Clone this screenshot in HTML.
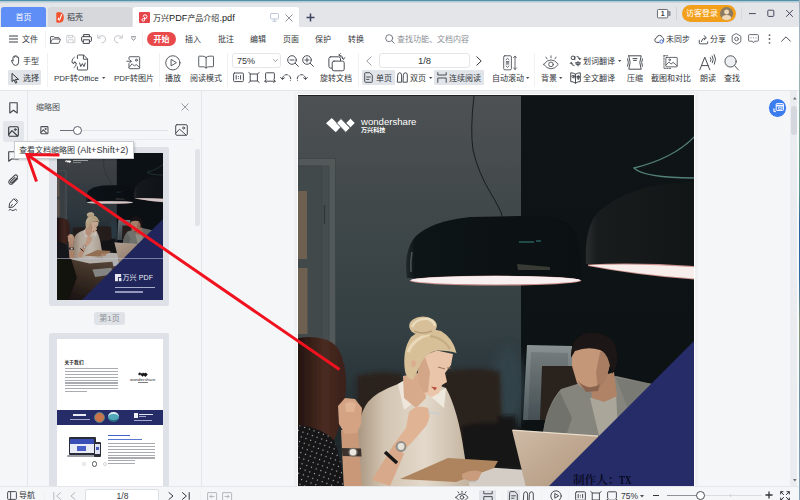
<!DOCTYPE html>
<html lang="zh-CN">
<head>
<meta charset="utf-8">
<title>万兴PDF产品介绍.pdf</title>
<style>
*{box-sizing:border-box;margin:0;padding:0}
html,body{width:800px;height:500px;overflow:hidden;background:#f5f6f8}
body{position:relative;font-family:"Liberation Sans","Noto Sans CJK SC",sans-serif;font-size:8px;color:#3a3d42;line-height:1}
.a{position:absolute}
.t{position:absolute;white-space:nowrap;line-height:12px;height:12px;font-size:8px;color:#33363b}
.c{text-align:center}
.vd{position:absolute;width:1px;background:#eff1f3}
svg{position:absolute;overflow:visible}
.ic{fill:none;stroke:#4a4e55;stroke-width:1;stroke-linecap:round;stroke-linejoin:round}
.hl{position:absolute;background:#e1e5ea;border-radius:1px}
</style>
</head>
<body>
<svg style="left:0;top:0" width="0" height="0"><defs>
<filter id="b1" x="-20%" y="-20%" width="140%" height="140%"><feGaussianBlur stdDeviation="0.7"/></filter>
<filter id="b2" x="-20%" y="-20%" width="140%" height="140%"><feGaussianBlur stdDeviation="2"/></filter>
<filter id="b4" x="-30%" y="-30%" width="160%" height="160%"><feGaussianBlur stdDeviation="5"/></filter>
<filter id="b8" x="-50%" y="-50%" width="200%" height="200%"><feGaussianBlur stdDeviation="14"/></filter>
<linearGradient id="wallL" x1="0" y1="0" x2="0" y2="1"><stop offset="0" stop-color="#4d5153"/><stop offset="0.12" stop-color="#474c4e"/><stop offset="0.26" stop-color="#3d4648"/><stop offset="0.44" stop-color="#333f42"/><stop offset="0.52" stop-color="#2b363a"/><stop offset="0.62" stop-color="#20292c"/><stop offset="1" stop-color="#181f22"/></linearGradient>
<linearGradient id="wallR" x1="0" y1="0" x2="0" y2="1"><stop offset="0" stop-color="#0f1517"/><stop offset="1" stop-color="#0b0f11"/></linearGradient>
<linearGradient id="lampG" x1="0" y1="0" x2="1" y2="0"><stop offset="0" stop-color="#232a2c"/><stop offset="0.05" stop-color="#0e1517"/><stop offset="1" stop-color="#0b1012"/></linearGradient>
<linearGradient id="lamp2G" x1="0" y1="0" x2="1" y2="0"><stop offset="0" stop-color="#2c2e2e"/><stop offset="0.1" stop-color="#181c1d"/><stop offset="1" stop-color="#111516"/></linearGradient>
<linearGradient id="shirtG" x1="0" y1="0" x2="1" y2="0"><stop offset="0" stop-color="#a8957f"/><stop offset="0.25" stop-color="#d3c5b2"/><stop offset="0.6" stop-color="#e3d9cb"/><stop offset="1" stop-color="#c3b39e"/></linearGradient>
<linearGradient id="lapG" x1="0" y1="0" x2="1" y2="1"><stop offset="0" stop-color="#cfbba6"/><stop offset="0.5" stop-color="#bba38c"/><stop offset="1" stop-color="#9a846e"/></linearGradient>
<linearGradient id="hairG" x1="0" y1="0" x2="1" y2="0"><stop offset="0" stop-color="#24140f"/><stop offset="0.55" stop-color="#4a2b21"/><stop offset="1" stop-color="#3a2019"/></linearGradient>
<pattern id="dots" width="5" height="5" patternUnits="userSpaceOnUse" patternTransform="rotate(20)"><rect width="5" height="5" fill="#121217"/><circle cx="2.5" cy="2.5" r="0.7" fill="#b9b6b0"/></pattern>
<symbol id="photo" viewBox="298 96 397 550" preserveAspectRatio="xMidYMin slice">
<rect x="298" y="96" width="226" height="540" fill="url(#wallL)"/>
<rect x="521" y="96" width="180" height="540" fill="url(#wallR)"/>
<!-- door -->
<g filter="url(#b1)">
<path d="M298 158.5H335.5V345H298Z" fill="#525959" stroke="#3b4244" stroke-width="0.8"/>
<path d="M298 166H329V345H298Z" fill="#474e50" stroke="#3d4446" stroke-width="0.7"/>
<path d="M298 166H322V345H298Z" fill="#434a4c" stroke="#3a4143" stroke-width="0.6"/>
<path d="M298 191H307V259H298ZM298 268H307.5V334H298Z" fill="#6d6051"/>
<path d="M324.5 205V224" stroke="#2f3537" stroke-width="1.4" fill="none"/>
</g>
<ellipse cx="508" cy="388" rx="16" ry="42" fill="#33434a" filter="url(#b4)"/>
<!-- frames behind man -->
<g filter="url(#b1)">
<linearGradient id="frmG" x1="0" y1="0" x2="0" y2="1"><stop offset="0" stop-color="#899191"/><stop offset="1" stop-color="#4f5b60"/></linearGradient><path d="M527 345L572 346L573 420H523Z" fill="url(#frmG)"/>
<path d="M531 352L568 353L569 420H528Z" fill="#000" opacity="0.12"/>
<path d="M542 366H578V420H540Z" fill="#2c221d"/>
</g>
<!-- chairs -->
<g filter="url(#b2)">
<path d="M357 376Q380 370 402 374V425H357Z" fill="#2b221d"/>
<path d="M443 372Q480 366 500 372L503 448H443Z" fill="#2b201b"/>
<path d="M462 426Q495 418 524 428V470H462Z" fill="#141618"/>
<path d="M498 416H516V470H498Z" fill="#121517"/>
</g>
<!-- cords -->
<path d="M474 96Q470 130 473 150Q478 172 490 192T502 216" stroke="#121719" stroke-width="0.9" fill="none"/>
<path d="M696 135Q675 158 634 168Q644 178 696 178" stroke="#527f78" stroke-width="1.3" fill="none"/>
<!-- lamp 1 -->
<path d="M407 278Q403 250 416 236Q432 221 470 217L540 215.5Q566 217 576 232Q582 250 581 280Z" fill="url(#lampG)"/>
<path d="M412 252Q410 262 411 272" stroke="#4a5052" stroke-width="1.6" fill="none" filter="url(#b1)"/>
<ellipse cx="495.5" cy="280.6" rx="86" ry="5" fill="#c98f8a"/>
<ellipse cx="495.5" cy="280.2" rx="84.5" ry="4.2" fill="#f8f0f0" filter="url(#b1)"/>
<path d="M519 242H534M536 241H541" stroke="#3f9f96" stroke-width="1.2" fill="none" opacity="0.8"/>
<path d="M517 264L550 267V270H518Z" fill="#3d4038" opacity="0.9"/>
<!-- lamp 2 -->
<path d="M586 264Q584 228 598 212Q624 190 660 185L700 181.5V266Z" fill="url(#lamp2G)"/>
<path d="M588 264.5Q640 262 700 266.5V280Q640 276 588 266Z" fill="#c98f8a"/>
<path d="M590 265Q640 263 700 267.5V279Q640 275 590 265.5Z" fill="#f7eeec" filter="url(#b1)"/>
<!-- man -->
<g filter="url(#b1)">
<path d="M543 434Q546 406 561 389L590 380L616 376L652 384Q661 398 664 440Z" fill="#85857e"/>
<path d="M543 434Q546 408 560 392L572 418L566 436Z" fill="#72726c"/>
<path d="M616 378L652 384Q660 398 664 440H640Z" fill="#7a7a74"/>
<path d="M590 398L616 392L618 432L600 440Z" fill="#aaa699"/>
<path d="M590 380L614 372L617 396L604 402L592 398Z" fill="#b08266"/>
<path d="M572 350L590 345L606 350L610 364L606 380L598 390L586 391L577 383L572 366Z" fill="#c59779"/>
<path d="M600 352L606 350L610 364L606 380L598 390L596 372Z" fill="#a87d62"/>
<path d="M577 380Q588 392 600 384L598 391L586 392Z" fill="#8a6450"/>
<path d="M571 358Q570 340 584 334Q600 330 612 340Q619 350 617 364L612 374L609 362Q606 352 600 350Q588 346 575 351Z" fill="#1e1613"/>
</g>
<!-- table -->
<linearGradient id="tblG" x1="0.8" y1="0" x2="0.1" y2="1"><stop offset="0" stop-color="#7a6650"/><stop offset="0.45" stop-color="#4e3c2c"/><stop offset="1" stop-color="#1b1410"/></linearGradient>
<path d="M298 482H700V650H298Z" fill="url(#tblG)" filter="url(#b2)"/>
<path d="M345 482L520 478L528 500L420 508L350 492Z" fill="#d6d0c8" filter="url(#b2)"/>
<path d="M430 530L500 524L512 548L440 558Z" fill="#9c9c98" filter="url(#b1)"/>
<path d="M482 467L527 470L531 492H472Z" fill="#d3cdc5" filter="url(#b1)"/>
<path d="M504 498L528 496L530 516L508 518Z" fill="#cdcfce" filter="url(#b1)"/>
<path d="M298 488H350L372 560L340 650H298Z" fill="#17120f" filter="url(#b2)"/>
<!-- laptop -->
<path d="M512 430L598 436L612 500L530 504Z" fill="url(#lapG)" filter="url(#b1)"/>
<path d="M512.5 430.2L598 436.2" stroke="#e9dccb" stroke-width="1.2" fill="none"/>
<!-- blonde woman -->
<g filter="url(#b1)">
<path d="M357 470Q354 420 368 402Q376 392 398 384L412 376L446 388Q458 410 464 452L470 490H357Z" fill="url(#shirtG)"/>
<path d="M398 384L412 376L420 398L404 410Z" fill="#eee6da"/>
<path d="M430 396L446 388L444 408Z" fill="#efe8dc"/>
<path d="M403 376L423 372L426 398L416 408L404 398Z" fill="#d7aa8c"/>
<path d="M419 365L425 355L437 350.6L453 354L451 365L445 373L447 382L442 385L439 393L432 397L423 393L417 381Z" fill="#eac5a9"/>
<path d="M419 365L425 357L430 372L428 392L423 393L417 381Z" fill="#d3a688"/>
<path d="M431 386.5L437 387.5L435 390.5Z" fill="#b9503f"/>
<path d="M438 367L445 369M447 368L451 368" stroke="#8a6a55" stroke-width="0.9" fill="none"/>
<path d="M405 371Q402 350 411 337Q424 327 441 331Q453 338 456.5 353Q450 351 437 350.6Q427 353 422 361L417 372L413 380Q406 378 405 371Z" fill="#d7bf98"/>
<path d="M408 352Q414 338 430 334" stroke="#ead9b8" stroke-width="3.2" fill="none"/>
<path d="M430 336Q444 338 450 349" stroke="#c4ab82" stroke-width="2" fill="none"/>
<ellipse cx="413.5" cy="363.5" rx="2.4" ry="3.6" fill="#dcae90"/>
<ellipse cx="423" cy="326" rx="13.8" ry="9.4" fill="#d6bf99"/>
<path d="M412 327Q416 318 428 319Q434 321 435 326" stroke="#eadbbd" stroke-width="2.4" fill="none"/>
<path d="M414 331Q422 335 432 331" stroke="#b89f78" stroke-width="1.4" fill="none"/>
<path d="M409 412Q416 404 428 408Q432 416 426 426L414 440L402 452L394 444L406 428Z" fill="#e0b394"/>
<path d="M372 480L394 444L404 454L390 486Z" fill="#d8aa8b"/>
<circle cx="401" cy="446.5" r="5.4" fill="#8f8d88"/><circle cx="401" cy="446.5" r="3.4" fill="#e6e2da"/>
<path d="M385 452L397 463" stroke="#141414" stroke-width="3.4" fill="none"/>
<path d="M428 412L440 414" stroke="#c9ccd0" stroke-width="1.4" fill="none"/>
</g>
<!-- clipboard -->
<path d="M400 479L448 458L498 461L494 468L456 482Z" fill="#ad845d" filter="url(#b1)"/>
<path d="M462 474Q472 468 482 472L478 480Q468 482 462 478Z" fill="#c99c7e" filter="url(#b1)"/>
<!-- dark haired woman -->
<g filter="url(#b1)">
<path d="M298 338Q326 334 338 348Q347 364 346 390Q344 420 334 440L298 440Z" fill="url(#hairG)"/>
<path d="M341 430L358 430L362 490H344Z" fill="#c99878"/>
<path d="M338 406L345 398L355 399L362 408L361 424L357 433L345 434L339 424Z" fill="#d3a383"/>
<path d="M345 404Q350 400 356 404L354 412L346 412Z" fill="#e0b394"/>
<path d="M341.5 448L361 448.5L361.5 456.5L342.5 456Z" fill="#3a332e"/>
<circle cx="353" cy="452.3" r="4.6" fill="#7a746c"/><circle cx="353" cy="452.3" r="3.3" fill="#ebe7df"/>
<path d="M298 425Q322 428 334 440Q342 460 344 490H298Z" fill="url(#dots)"/>
</g>
<!-- navy triangle + bottom band -->
<path d="M695 340V650H385Z" fill="#262c68"/>
</symbol>
</defs></svg>

<!-- ===== title / tab bar ===== -->
<div class="a" id="titlebar" style="left:0;top:0;width:800px;height:27px;background:#e3e5e9"></div>
<div class="a" style="left:0;top:0;width:800px;height:1px;background:#4f92aa"></div><div class="a" style="left:0;top:1px;width:800px;height:1px;background:#b4cbd5"></div>
<div class="a" style="left:0;top:2px;width:800px;height:1px;background:#c9d6dd"></div>
<div class="a" id="tab-home" style="left:1px;top:7px;width:45px;height:20px;background:#5f8ef7;border-radius:3px 3px 0 0"></div>
<div class="t c" style="left:1px;top:12px;width:45px;color:#fff">首页</div>
<div class="a" id="tab-dk" style="left:48px;top:7px;width:84px;height:20px;background:#d6d8dc;border-radius:3px 3px 0 0"></div>
<div class="t" style="left:67px;top:12px">稻壳</div>
<div class="a" id="tab-act" style="left:133px;top:7px;width:166px;height:20px;background:#fff;border-radius:3px 3px 0 0"></div>
<div class="t" style="left:153px;top:11.7px;color:#222">万兴<span style="font-size:9.2px">PDF</span>产品介绍<span style="font-size:9.2px">.pdf</span></div>

<!-- ===== menu bar ===== -->
<div class="a" id="menubar" style="left:0;top:27px;width:800px;height:23px;background:#fff"></div>

<!-- tab icons -->
<svg style="left:56px;top:12px" width="8" height="11" viewBox="0 0 8 11"><path d="M0.3 1.5Q0.3 0.3 1.5 0.3H4.2Q7.8 1 7.8 5.5Q7.8 10.7 3 10.7H1.5Q0.3 10.7 0.3 9.5Z" fill="#f4502c"/><path d="M5.6 2.6L3.9 7.2Q3.4 8.3 2.5 7.6Q1.9 7 2.6 6.2" fill="none" stroke="#fff" stroke-width="1.1" stroke-linecap="round"/></svg>
<svg style="left:139px;top:12px" width="11" height="11" viewBox="0 0 11 11"><rect width="11" height="11" rx="1" fill="#e5454a"/><path d="M4.2 4.8A1.9 1.9 0 1 1 6.1 6.6H4.4A1.3 1.3 0 1 0 5.6 7.9V5" fill="none" stroke="#fff" stroke-width="1"/></svg>
<svg style="left:270px;top:13px" width="9" height="9" viewBox="0 0 9 9" class="ic" stroke="#b4bfd0"><rect x="0.5" y="0.5" width="8" height="5.5" rx="0.8" style="stroke:#bcc7d9"/><path d="M4.5 6V8M2.8 8.3H6.2" style="stroke:#bcc7d9"/></svg>
<svg style="left:285px;top:14px" width="8" height="8" viewBox="0 0 8 8"><path d="M0.5 0.5L7.5 7.5M7.5 0.5L0.5 7.5" stroke="#8d9097" stroke-width="1" fill="none"/></svg>
<svg style="left:306px;top:13px" width="9" height="9" viewBox="0 0 9 9"><path d="M4.5 0.5V8.5M0.5 4.5H8.5" stroke="#3d4560" stroke-width="1.5" fill="none"/></svg>
<!-- window controls -->
<svg style="left:657.4px;top:8.8px" width="14" height="9.4" viewBox="0 0 15 10"><rect x="0.5" y="0.5" width="11" height="9" rx="1" fill="#fff" stroke="#5d6168"/><path d="M12 2H14L14.5 3.5V7.5H12Z" fill="#8a8e95"/><text x="6" y="8" font-size="7.5" text-anchor="middle" fill="#3a3d42" font-family="Liberation Sans,sans-serif" font-weight="bold">1</text></svg>
<div class="vd" style="left:676px;top:7px;height:13px;background:#cfd2d7"></div>
<div class="a" style="left:682px;top:5px;width:53.5px;height:17px;border-radius:9px;background:#f2a01c;box-shadow:0 0 0 1px #dfe4f2"></div>
<div class="t" style="left:686px;top:8.3px;color:#fff">访客登录</div>
<svg style="left:720.4px;top:7.4px" width="13.2" height="13.2" viewBox="0 0 14 14"><circle cx="7" cy="7" r="7" fill="#8d7a62"/><circle cx="7" cy="5.3" r="2.6" fill="#f0d9b8"/><path d="M2 12Q2.5 8.6 7 8.6T12 12A7 7 0 0 1 2 12Z" fill="#f0d9b8"/></svg>
<div class="vd" style="left:741px;top:7px;height:13px;background:#d5d8dc"></div>
<svg style="left:749px;top:8px" width="45" height="10" viewBox="0 0 45 10" fill="none" stroke="#454a5e" stroke-width="1"><path d="M0 5.6H6.8"/><rect x="18.8" y="2.2" width="6" height="6.2" rx="0.8"/><path d="M37.2 2L43.8 8.8M43.8 2L37.2 8.8"/></svg>

<!-- menu row -->
<svg style="left:9px;top:35px" width="9" height="8" viewBox="0 0 9 8"><path d="M0 1H9M0 4H9M0 7H9" stroke="#3c3f45" stroke-width="1" fill="none"/></svg>
<div class="t" style="left:22px;top:34.3px">文件</div>
<div class="vd" style="left:45px;top:31px;height:16px"></div>
<svg style="left:50px;top:35.6px" width="11" height="8" viewBox="0 0 11 10" preserveAspectRatio="none" class="ic"><path d="M0.5 8.5V1.3Q0.5 0.7 1.1 0.7H3.6L4.8 2H8.6Q9.2 2 9.2 2.6V3.8M0.5 8.9L2.2 4.2Q2.4 3.8 2.9 3.8H10Q10.7 3.8 10.4 4.5L9 8.6Q8.8 9.2 8.2 9.2H1Q0.5 9.2 0.5 8.7"/></svg>
<svg style="left:66px;top:35.4px" width="9.5" height="8.2" viewBox="0 0 10 10" preserveAspectRatio="none" class="ic"><path d="M0.6 1.2Q0.6 0.6 1.2 0.6H7.3L9.4 2.7V8.8Q9.4 9.4 8.8 9.4H1.2Q0.6 9.4 0.6 8.8ZM2.6 0.8V3.3H6.8V0.8M2.4 9.2V5.8H7.6V9.2" stroke="#c9ccd1"/></svg>
<svg style="left:81px;top:34px" width="11" height="10" viewBox="0 0 11 10" class="ic"><path d="M2.6 2.6V0.6H8.4V2.6M2.4 7.4H1.3Q0.6 7.4 0.6 6.7V3.4Q0.6 2.7 1.3 2.7H9.7Q10.4 2.7 10.4 3.4V6.7Q10.4 7.4 9.7 7.4H8.6M2.6 5.8H8.4V9.4H2.6Z" stroke="#3f4349"/></svg>
<svg style="left:97px;top:34px" width="10" height="10" viewBox="0 0 10 10" class="ic"><path d="M0.8 1V4H3.8M1 4Q3 1 5.8 1.6Q9.2 2.8 8.6 6Q8 8.6 5 9" stroke="#c3c6cb"/></svg>
<svg style="left:113px;top:34px" width="10" height="10" viewBox="0 0 10 10" class="ic"><path d="M9.2 1V4H6.2M9 4Q7 1 4.2 1.6Q0.8 2.8 1.4 6Q2 8.6 5 9" stroke="#c3c6cb"/></svg>
<svg style="left:131px;top:36.2px" width="5" height="5.4" viewBox="0 0 7 7" class="ic"><path d="M0.6 0.8H6.4M0.8 3L3.5 5.6L6.2 3" stroke="#4a4e55"/></svg>
<div class="vd" style="left:142px;top:31px;height:16px"></div>
<div class="a" style="left:147px;top:32px;width:29px;height:14px;border-radius:7px;background:#e8494a"></div>
<div class="t c" style="left:147px;top:34.3px;width:29px;color:#fff;font-weight:bold">开始</div>
<div class="t" style="left:185px;top:34.3px">插入</div>
<div class="t" style="left:218px;top:34.3px">批注</div>
<div class="t" style="left:250px;top:34.3px">编辑</div>
<div class="t" style="left:283px;top:34.3px">页面</div>
<div class="t" style="left:315px;top:34.3px">保护</div>
<div class="t" style="left:348px;top:34.3px">转换</div>
<svg style="left:385px;top:34px" width="10" height="10" viewBox="0 0 10 10" class="ic"><circle cx="4.2" cy="4.2" r="3.5" stroke="#777b82"/><path d="M6.8 6.8L9.3 9.3" stroke="#777b82"/></svg>
<div class="t" style="left:397px;top:34.3px;color:#8b8f96">查找功能、文档内容</div>
<!-- menu right -->
<svg style="left:654px;top:34px" width="11" height="10" viewBox="0 0 11 10" class="ic"><path d="M5 8.4H2.8A2.3 2.3 0 0 1 2.5 3.9A3.1 3.1 0 0 1 8.5 3.6A2.4 2.4 0 0 1 9.8 6.5" stroke="#4a4e55"/><circle cx="7.6" cy="7.6" r="1.7" stroke="#4a74d8"/></svg>
<div class="t" style="left:666px;top:34.3px">未同步</div>
<svg style="left:698px;top:35px" width="11" height="9.4" viewBox="0 0 11 10" class="ic"><path d="M1 5.6V8.6Q1 9.4 1.8 9.4H9.2Q10 9.4 10 8.6V7.2M3.2 7Q3.6 3.2 7.6 3M6.2 0.8L8.6 3L6.2 5.2"/></svg>
<div class="t" style="left:710px;top:34.3px">分享</div>
<svg style="left:731px;top:33px" width="11" height="12" viewBox="0 0 11 12" class="ic"><path d="M5.5 0.7L9.8 3.2V8.8L5.5 11.3L1.2 8.8V3.2Z" stroke="#6a6e75"/><circle cx="5.5" cy="6" r="1.8" stroke="#6a6e75"/></svg>
<svg style="left:748px;top:34px" width="11" height="10" viewBox="0 0 11 10" class="ic"><path d="M0.6 1.4Q0.6 0.6 1.4 0.6H9.6Q10.4 0.6 10.4 1.4V6.4Q10.4 7.2 9.6 7.2H6.6L5.5 8.8L4.4 7.2H1.4Q0.6 7.2 0.6 6.4Z" stroke="#6a6e75"/><path d="M3 3.9H3.1M5.5 3.9H5.6M8 3.9H8.1" stroke="#6a6e75"/></svg>
<svg style="left:768px;top:34px" width="3" height="10" viewBox="0 0 3 10"><circle cx="1.5" cy="1.2" r="0.9" fill="#5d6168"/><circle cx="1.5" cy="5" r="0.9" fill="#5d6168"/><circle cx="1.5" cy="8.8" r="0.9" fill="#5d6168"/></svg>
<svg style="left:781px;top:36px" width="10" height="6" viewBox="0 0 10 6" class="ic"><path d="M0.6 5.2L5 0.8L9.4 5.2"/></svg>

<!-- ===== toolbar ===== -->
<div class="a" id="toolbar" style="left:0;top:50px;width:800px;height:40px;background:#fff"></div>
<div class="a" style="left:0;top:90px;width:800px;height:1px;background:#e3e5e8"></div>

<!-- hand / select -->
<svg style="left:11px;top:55px" width="9" height="11" viewBox="0 0 9 11" class="ic"><path d="M2 6V2.4Q2 1.6 2.7 1.6T3.4 2.4V1.4Q3.4 0.6 4.1 0.6T4.8 1.4V1.8Q4.8 1 5.5 1T6.2 1.8V2.6Q6.2 1.9 6.9 1.9T7.6 2.7V7Q7.6 10.4 4.6 10.4Q2.6 10.4 1.6 8.2L0.6 6Q0.4 5.2 1 5T2 5.6"/></svg>
<div class="t" style="left:23px;top:55.6px">手型</div>
<div class="hl" style="left:8px;top:70px;width:32.5px;height:15px"></div>
<svg style="left:11px;top:73px" width="9" height="11" viewBox="0 0 9 11" class="ic"><path d="M1 0.8V8.6L3 6.8L4.6 10.2L5.8 9.6L4.4 6.4H7.2Z" stroke="#33363b"/></svg>
<div class="t" style="left:23px;top:72.7px">选择</div>
<div class="vd" style="left:47px;top:53px;height:34px"></div>
<!-- PDF转Office -->
<svg style="left:71px;top:54px" width="18" height="17" viewBox="0 0 18 17" class="ic"><path d="M6.4 4.6V2Q6.4 1 7.4 1H12.6L16.6 5V15Q16.6 16 15.6 16H7.4Q6.4 16 6.4 15V12.8M12.4 1.2V5.2H16.4M8.6 9L9.8 12.6L11.4 9.6L13 12.6L14.2 9"/><path d="M3.4 3.2Q1 4.6 1 7.2Q1.2 8.6 2.4 9.4M0.8 8.2L2.4 9.6L3.6 8M3 13.6Q5.2 12.4 5.2 10Q5 8.8 4 8M5.4 9.4L3.8 7.8L2.8 9.4" stroke-width="0.9"/></svg>
<div class="t" style="left:54px;top:72.9px">PDF转Office</div>
<svg style="left:101.5px;top:77px" width="3.4" height="2.6" viewBox="0 0 4 3"><path d="M0 0H4L2 2.4Z" fill="#4a4e55"/></svg>
<!-- PDF转图片 -->
<svg style="left:125.5px;top:55.6px" width="15" height="13.6" viewBox="0 0 16 15" class="ic"><path d="M3 3.4V1.6Q3 0.8 3.8 0.8H14Q14.8 0.8 14.8 1.6V13.2Q14.8 14 14 14H3.8Q3 14 3 13.2V8.4M3.2 12.4L6.6 8.6L9 11L11 9.4L14.6 12.6"/><circle cx="11.2" cy="4.6" r="1.1"/><path d="M0.6 5.8H5.4M3.8 4L5.6 5.8L3.8 7.6"/></svg>
<div class="t" style="left:114px;top:72.9px">PDF转图片</div>
<div class="vd" style="left:159px;top:53px;height:34px"></div>
<!-- 播放 -->
<svg style="left:165.4px;top:54.7px" width="15.7" height="15.7" viewBox="0 0 17 17" class="ic"><circle cx="8.5" cy="8.5" r="7.7"/><path d="M6.6 5.2V11.8L12 8.5Z"/></svg>
<div class="t" style="left:165px;top:72.9px">播放</div>
<!-- 阅读模式 -->
<svg style="left:198px;top:55.4px" width="16.2" height="14.4" viewBox="0 0 18 15" class="ic"><path d="M9 2.2Q7.6 0.8 5 0.8H1.4Q0.8 0.8 0.8 1.4V12Q0.8 12.6 1.4 12.6H6Q8 12.6 9 14.2Q10 12.6 12 12.6H16.6Q17.2 12.6 17.2 12V1.4Q17.2 0.8 16.6 0.8H13Q10.4 0.8 9 2.2ZM9 2.4V14"/></svg>
<div class="t" style="left:190px;top:72.9px">阅读模式</div>
<div class="vd" style="left:227px;top:53px;height:34px"></div>
<!-- zoom -->
<div class="a" style="left:232px;top:53px;width:49px;height:15px;border:1px solid #e4e6ea;border-radius:3px;background:#fff"></div>
<div class="t" style="left:237px;top:55.4px;font-size:9px">75%</div>
<svg style="left:272.5px;top:59px" width="5" height="3.4" viewBox="0 0 7 5" class="ic"><path d="M0.6 0.8L3.5 3.8L6.4 0.8" stroke="#6a6e75"/></svg>
<svg style="left:287px;top:55px" width="12" height="12" viewBox="0 0 12 12" class="ic"><circle cx="5" cy="5" r="4.3"/><path d="M8.2 8.2L11.4 11.4M3 5H7"/></svg>
<svg style="left:302px;top:55px" width="12" height="12" viewBox="0 0 12 12" class="ic"><circle cx="5" cy="5" r="4.3"/><path d="M8.2 8.2L11.4 11.4M3 5H7M5 3V7"/></svg>
<svg style="left:233px;top:72px" width="11" height="11" viewBox="0 0 11 11" class="ic"><rect x="0.6" y="1" width="9.8" height="8.6" rx="1"/><path d="M3.2 3.6V7.2M7.6 3.6V7.2M5.4 4.4V4.5M5.4 6.3V6.4"/></svg>
<svg style="left:248px;top:72px" width="12" height="11" viewBox="0 0 12 11" class="ic"><rect x="2.6" y="2" width="6.8" height="7"/><path d="M0.8 0.6L2.6 2M11.2 0.6L9.4 2M0.8 10.4L2.6 9M11.2 10.4L9.4 9"/></svg>
<svg style="left:264px;top:72px" width="12" height="11" viewBox="0 0 12 11" class="ic"><path d="M1.6 7V1.4Q1.6 0.8 2.2 0.8H9.8Q10.4 0.8 10.4 1.4V7M0.8 9.2H11.2M2.2 7.8L0.8 9.2L2.2 10.6M9.8 7.8L11.2 9.2L9.8 10.6"/></svg>
<svg style="left:280px;top:72px" width="12" height="11" viewBox="0 0 12 11" class="ic"><path d="M2.4 7.2A4.2 4.2 0 1 1 10.4 8.6" stroke-dasharray="3.2 1.6"/><path d="M0.6 5.4L2.4 7.4L4.4 5.8"/></svg>
<svg style="left:296px;top:72px" width="12" height="11" viewBox="0 0 12 11" class="ic"><path d="M9.6 7.2A4.2 4.2 0 1 0 1.6 8.6" stroke-dasharray="3.2 1.6"/><path d="M11.4 5.4L9.6 7.4L7.6 5.8"/></svg>
<!-- 旋转文档 -->
<svg style="left:328px;top:54px" width="18" height="18" viewBox="0 0 18 18" class="ic"><rect x="0.9" y="2.8" width="11.6" height="11.3" rx="1.8"/><rect x="4.2" y="7.1" width="12" height="9.7" rx="1.8" fill="#fff"/><path d="M11 1Q14.8 1.2 15.4 5M13.8 3.8L15.5 5.4L16.8 3.6M12.4 -0.4L10.8 1L12.4 2.4" stroke-width="0.9"/></svg>
<div class="t" style="left:320px;top:72.9px">旋转文档</div>
<div class="vd" style="left:358px;top:53px;height:34px"></div>
<!-- page nav -->
<svg style="left:366px;top:56px" width="6" height="10" viewBox="0 0 6 10" class="ic"><path d="M5.2 0.8L0.8 5L5.2 9.2" stroke="#9a9ea5"/></svg>
<div class="a" style="left:379px;top:53px;width:91px;height:15px;border:1px solid #e4e6ea;border-radius:3px;background:#fff"></div>
<div class="t c" style="left:379px;top:55.4px;width:91px;font-size:9.5px">1/8</div>
<svg style="left:476px;top:56px" width="6" height="10" viewBox="0 0 6 10" class="ic"><path d="M0.8 0.8L5.2 5L0.8 9.2" stroke="#33363b"/></svg>
<div class="hl" style="left:362px;top:70px;width:33px;height:15px"></div>
<svg style="left:364px;top:72px" width="9" height="11" viewBox="0 0 9 11" class="ic"><path d="M0.7 1.4Q0.7 0.7 1.4 0.7H5.8L8.3 3.2V9.6Q8.3 10.3 7.6 10.3H1.4Q0.7 10.3 0.7 9.6ZM2.6 5H6.4M2.6 7.4H5"/></svg>
<div class="t" style="left:376px;top:72.7px">单页</div>
<svg style="left:397px;top:72px" width="11" height="11" viewBox="0 0 11 11" class="ic"><path d="M0.7 3Q0.7 0.8 2.6 0.8T4.6 3V10.2H0.7ZM6.4 3Q6.4 0.8 8.4 0.8T10.3 3V10.2H6.4Z"/></svg>
<div class="t" style="left:410px;top:72.7px">双页</div>
<svg style="left:428.5px;top:77px" width="3.4" height="2.6" viewBox="0 0 4 3"><path d="M0 0H4L2 2.4Z" fill="#4a4e55"/></svg>
<div class="hl" style="left:434px;top:70px;width:50px;height:15px"></div>
<svg style="left:437px;top:72px" width="10" height="11" viewBox="0 0 10 11" class="ic"><path d="M0.8 0.6V3H9.2V0.6M0.8 10.4V6H9.2V10.4"/></svg>
<div class="t" style="left:449px;top:72.7px">连续阅读</div>
<!-- 自动滚动 -->
<svg style="left:503px;top:55px" width="14.6" height="15.6" viewBox="0 0 17 18" class="ic"><rect x="0.8" y="0.8" width="9" height="16.4" rx="1.4"/><path d="M3.6 5.4L5.3 3.8L7 5.4M3.6 12.6L5.3 14.2L7 12.6M3.8 7.6H6.8M3.8 9H6.8M3.8 10.4H6.8M14 1.4V16.6M12.4 3L14 1.2L15.6 3M12.4 15L14 16.8L15.6 15"/></svg>
<div class="t" style="left:492px;top:72.9px">自动滚动</div>
<svg style="left:525.5px;top:77px" width="3.4" height="2.6" viewBox="0 0 4 3"><path d="M0 0H4L2 2.4Z" fill="#4a4e55"/></svg>
<div class="vd" style="left:534px;top:53px;height:34px"></div>
<!-- 背景 -->
<svg style="left:543.2px;top:54.5px" width="16" height="15.4" viewBox="0 0 18 17" class="ic"><path d="M0.8 10.4Q4.4 5.4 9 5.4T17.2 10.4Q13.6 15.4 9 15.4T0.8 10.4Z"/><circle cx="9" cy="10.4" r="2.6"/><path d="M9 0.8V3M3.2 2.2L4.6 4.2M14.8 2.2L13.4 4.2"/></svg>
<div class="t" style="left:541px;top:72.9px">背景</div>
<svg style="left:558.5px;top:77px" width="3.4" height="2.6" viewBox="0 0 4 3"><path d="M0 0H4L2 2.4Z" fill="#4a4e55"/></svg>
<!-- 划词翻译 / 全文翻译 -->
<svg style="left:570px;top:55px" width="11" height="12" viewBox="0 0 11 12" class="ic"><circle cx="3" cy="2.8" r="1.8"/><path d="M4.8 1.4V4.8M7 1.4Q9.8 1.6 9.8 4.4M8.8 3.4L9.8 4.6L10.8 3.4M4 10.6Q1.2 10.4 1.2 7.6M0.2 8.6L1.2 7.4L2.2 8.6M5.6 7.8H10.4M8 6.4V11M6.2 7.8V9.6H9.8V7.8"/></svg>
<div class="t" style="left:583px;top:55.6px">划词翻译</div>
<svg style="left:617.5px;top:60px" width="3.4" height="2.6" viewBox="0 0 4 3"><path d="M0 0H4L2 2.4Z" fill="#4a4e55"/></svg>
<svg style="left:570px;top:72px" width="11" height="12" viewBox="0 0 11 12" class="ic"><path d="M5.5 2.2V11.2M5.5 2.2Q3 0.6 0.7 0.8V9.6Q3 9.4 5.5 11.2Q8 9.4 10.3 9.6V0.8Q8 0.6 5.5 2.2"/><circle cx="2.9" cy="4.4" r="1.1"/><path d="M4 3.4V6M7 4.6H9.4M8.2 3.4V7.6M7.2 4.6V6.2H9.2V4.6"/></svg>
<div class="t" style="left:583px;top:72.7px">全文翻译</div>
<!-- 压缩 -->
<svg style="left:627.2px;top:55.2px" width="16" height="15" viewBox="0 0 16 15" class="ic"><path d="M1.8 0.8H14.2Q11.4 7.5 14.2 14.2H1.8Q4.6 7.5 1.8 0.8ZM6 3.6H10M6.6 5.4H9.4M0.6 3.8Q2.2 7.5 0.6 11.2M15.4 3.8Q13.8 7.5 15.4 11.2"/></svg>
<div class="t" style="left:627px;top:72.9px">压缩</div>
<!-- 截图和对比 -->
<svg style="left:663px;top:55px" width="15.2" height="14.6" viewBox="0 0 17 17" class="ic"><rect x="3" y="2.8" width="13.2" height="11" rx="0.6"/><path d="M3.2 11.6L6.6 8.2L9 10.6L11.4 8.6L16 12.4"/><circle cx="7.4" cy="5.6" r="1"/><path d="M0.8 0.8V15.6H9" stroke-dasharray="1.6 1.4"/><path d="M0.8 0.8H5" stroke-dasharray="1.6 1.4"/></svg>
<div class="t" style="left:651px;top:72.9px">截图和对比</div>
<!-- 朗读 -->
<svg style="left:699px;top:54px" width="18" height="17" viewBox="0 0 18 17" class="ic"><path d="M0.8 15.8L5.8 3.2L10.8 15.8M2.4 11.6H9.2M11.4 3.6Q12.8 5.4 11.6 7.4M13.2 2Q15.4 5.2 13.4 8.8M15.2 0.6Q18 5 15.4 10.2"/></svg>
<div class="t" style="left:700px;top:72.9px">朗读</div>
<!-- 查找 -->
<svg style="left:724px;top:54.6px" width="15.4" height="16" viewBox="0 0 16 17" class="ic"><circle cx="6.8" cy="6.8" r="6" fill="#edeff2"/><path d="M11.2 11.4L15.2 16"/></svg>
<div class="t" style="left:724px;top:72.9px">查找</div>


<!-- ===== left icon column ===== -->
<div class="a" id="leftcol" style="left:0;top:91px;width:27px;height:395px;background:#f5f6f8"></div>
<div class="a" style="left:27px;top:91px;width:1px;height:395px;background:#e4e6ea"></div>
<!-- thumbnail panel -->
<div class="a" id="thumbpanel" style="left:28px;top:91px;width:173px;height:395px;background:#f5f6f8"></div>
<div class="a" style="left:201px;top:91px;width:1px;height:395px;background:#e4e6ea"></div>


<!-- left icons -->
<svg style="left:9px;top:102px" width="9" height="12" viewBox="0 0 9 12" class="ic"><path d="M0.8 0.7H8.2V11L4.5 8.2L0.8 11Z" stroke="#3f4349" stroke-width="1.1"/></svg>
<div class="a" style="left:3px;top:121px;width:21px;height:21px;background:#e3e6ea;border-radius:2px"></div>
<svg style="left:8px;top:126px" width="11" height="11" viewBox="0 0 11 11" class="ic"><rect x="0.7" y="0.7" width="9.6" height="9.6" rx="1.2" stroke="#33363b" stroke-width="1.1"/><path d="M1 8.2L4 4.6L9.6 10" stroke="#33363b" stroke-width="1.1"/><circle cx="7.3" cy="3.6" r="0.9" stroke="#33363b"/></svg>
<svg style="left:8px;top:151px" width="11" height="11" viewBox="0 0 11 11" class="ic"><path d="M0.7 0.7H10.3V8H3.6L0.7 10.2Z" stroke="#3f4349" stroke-width="1.1"/></svg>
<svg style="left:7px;top:174px" width="13" height="12" viewBox="0 0 13 12" class="ic"><path d="M10.6 4.6L5.6 9.6Q4 11 2.4 9.6Q1 8 2.4 6.4L7.6 1.4Q8.8 0.4 10 1.4Q11 2.6 10 3.8L5 8.6Q4.4 9.2 3.8 8.6Q3.2 8 3.8 7.4L8 3.4" stroke="#3f4349" stroke-width="1.1"/></svg>
<svg style="left:8px;top:198px" width="12" height="13" viewBox="0 0 12 13" class="ic"><path d="M6 1L9.4 4.4L5.2 9L1 9.6L1.6 5.6ZM7.6 0.8L9.8 3M4.4 6.4L3 8M1 12Q2.4 10.6 3.6 12T6.2 12T8.6 12" stroke="#3f4349" stroke-width="1"/></svg>
<!-- thumbnail panel header -->
<div class="t" style="left:36px;top:102px;color:#4a4e55">缩略图</div>
<svg style="left:181px;top:103px" width="8" height="8" viewBox="0 0 8 8"><path d="M0.5 0.5L7.5 7.5M7.5 0.5L0.5 7.5" stroke="#8d9097" stroke-width="0.9" fill="none"/></svg>
<svg style="left:40px;top:126px" width="8.8" height="8.4" viewBox="0 0 8 8" class="ic"><rect x="0.6" y="0.6" width="6.8" height="6.8" rx="0.8"/><path d="M0.8 6L3 3.6L6.6 7.2"/><circle cx="5.2" cy="2.8" r="0.5"/></svg>
<div class="a" style="left:59.5px;top:130px;width:14px;height:1px;background:#6a6f7c"></div>
<div class="a" style="left:81px;top:130px;width:87px;height:1px;background:#dfe2e6"></div>
<div class="a" style="left:73.2px;top:126.2px;width:8.4px;height:8.4px;border:1px solid #5a5f6e;border-radius:5px;background:#fff"></div>
<svg style="left:175px;top:124px" width="13" height="12" viewBox="0 0 13 12" class="ic"><rect x="0.7" y="0.7" width="11.6" height="10.6" rx="1.2"/><path d="M1 9L4.6 5.2L11 11"/><circle cx="8.6" cy="4" r="1"/></svg>
<div class="a" style="left:35px;top:139px;width:158px;height:1px;background:#e8eaed"></div>
<!-- thumbnails -->
<div class="a" style="left:49px;top:147px;width:120px;height:159px;background:#dee2e8;border-radius:2px"></div>
<div class="a" id="thumb1" style="left:56.5px;top:153px;width:106.5px;height:146.6px;background:#20252c;overflow:hidden"><svg style="left:0;top:0" width="106.5" height="147.5" viewBox="298 96 397 550"><use href="#photo" x="298" y="96" width="397" height="550"/></svg>
<div class="a" style="left:0;top:0;width:107px;height:148px;background:rgba(4,6,24,.16)"></div>
<svg style="left:8.2px;top:7px" width="6.4" height="3.2" viewBox="0 0 28 14"><path d="M0 5.2L5.2 0L8.8 3.6L3.6 8.8ZM6.4 6.4L11.6 1.2L13.8 3.4L16.4 0.8L19 3.4L21.6 0.8L27.4 6.6L20.6 13.4L16.4 9.2L13.2 12.4L9.6 8.8L8.4 10Z" fill="#fff"/></svg>
<div class="a" style="left:16.5px;top:7.2px;width:15px;height:1px;background:#a9acad"></div>
<div class="a" style="left:16.5px;top:9.4px;width:8px;height:0.8px;background:#808586"></div>
<svg style="left:58.5px;top:120.6px" width="7" height="7.8" viewBox="0 0 8 8" preserveAspectRatio="none"><path d="M0 0H7V3H3.4V7.4H0Z" fill="#e8e9f0"/><rect x="4.4" y="4" width="3" height="3.4" fill="#e8e9f0"/></svg>
<div class="a" style="left:66px;top:119.5px;font-size:7px;line-height:10px;color:#eef0f6;white-space:nowrap;letter-spacing:0.1px">万兴 PDF</div>
<div class="a" style="left:58.5px;top:134.3px;width:40px;height:1.2px;background:#a9adcc"></div>
<div class="a" style="left:58.5px;top:138.4px;width:28px;height:1.4px;background:#9297bb"></div>
<div class="a" style="left:0;top:105px;width:107px;height:1px;background:rgba(190,200,216,.55)"></div></div>
<div class="a" style="left:94px;top:312px;width:31px;height:13.4px;background:#dfe2e7;border-radius:2.4px"></div>
<div class="t c" style="left:94px;top:312.7px;width:31px;color:#8b8f96">第1页</div>
<div class="a" style="left:49px;top:333px;width:120px;height:153px;background:#dee2e8;border-radius:2px 2px 0 0"></div>
<div class="a" id="thumb2" style="left:56.5px;top:339px;width:106.5px;height:147px;background:#fff;overflow:hidden"><div class="a" style="left:8px;top:20.5px;font-size:4.6px;line-height:6px;font-weight:bold;color:#222;white-space:nowrap;letter-spacing:0.2px">关于我们</div>
<div class="a" style="left:8.5px;top:29px;width:53px;height:26px;background:repeating-linear-gradient(180deg,#a9abb0 0,#a9abb0 1.1px,#fff 1.1px,#fff 2.9px)"></div>
<div class="a" style="left:30px;top:52.2px;width:32px;height:3px;background:#fff"></div>
<svg style="left:81px;top:32.5px" width="10" height="5.5" viewBox="0 0 28 14"><path d="M0 5.2L5.2 0L8.8 3.6L3.6 8.8ZM6.4 6.4L11.6 1.2L13.8 3.4L16.4 0.8L19 3.4L21.6 0.8L27.4 6.6L20.6 13.4L16.4 9.2L13.2 12.4L9.6 8.8L8.4 10Z" fill="#16171a"/></svg>
<div class="a" style="left:73.5px;top:38px;font-size:4.4px;line-height:5px;color:#2a2b2f;white-space:nowrap;width:25px;text-align:center">wondershare</div>
<div class="a" style="left:81px;top:43.2px;width:10px;height:1.2px;background:#7b7d82"></div>
<div class="a" style="left:0;top:71px;width:106px;height:14.5px;background:#262c68"></div>
<div class="a" style="left:16px;top:75px;width:13px;height:2.2px;background:#e8e9f2"></div>
<div class="a" style="left:13px;top:79.6px;width:20px;height:1.2px;background:#a7aace"></div>
<div class="a" style="left:37.5px;top:73px;width:10.5px;height:10.5px;border-radius:6px;background:#c9744a;border:1.6px solid #4f7f90"></div>
<div class="a" style="left:51.5px;top:73.2px;width:11px;height:10px;border-radius:6px;background:#4fa9b8;border-top:2px solid #d9eef0;border-bottom:2px solid #2c6f80"></div>
<div class="a" style="left:77px;top:74px;width:4px;height:4.5px;background:#eef0f6"></div>
<div class="a" style="left:82px;top:74.5px;width:14px;height:1.6px;background:#e1e3ef"></div>
<div class="a" style="left:82px;top:77.2px;width:7px;height:1.1px;background:#a7aace"></div>
<div class="a" style="left:77px;top:80.8px;width:18px;height:1.1px;background:#a7aace"></div>
<div class="a" style="left:12px;top:98px;width:27px;height:18px;background:#2a2d38;border-radius:1px"></div>
<div class="a" style="left:13.5px;top:99.5px;width:24px;height:14px;background:#e9ecf6"></div>
<div class="a" style="left:13.5px;top:99.5px;width:24px;height:5px;background:#3a4fb5"></div>
<div class="a" style="left:20px;top:107px;width:9px;height:5px;background:#4a5fc5"></div>
<div class="a" style="left:10px;top:116px;width:31px;height:1.5px;background:#9b9ea6;border-radius:1px"></div>
<div class="a" style="left:37px;top:103px;width:7px;height:15px;background:#2a2d38;border-radius:1px"></div>
<div class="a" style="left:38px;top:105px;width:5px;height:10px;background:#dfe3f3"></div>
<div class="a" style="left:39px;top:108px;width:3px;height:3px;background:#4458be"></div>
<div class="a" style="left:51px;top:95.5px;width:22px;height:1.5px;background:#3f62c9"></div>
<div class="a" style="left:51px;top:100.3px;width:34px;height:1.2px;background:#5877d0"></div>
<div class="a" style="left:51px;top:103.5px;width:47.5px;height:21px;background:repeating-linear-gradient(180deg,#a9abb0 0,#a9abb0 1.1px,#fff 1.1px,#fff 2.9px)"></div>
<div class="a" style="left:78px;top:120.6px;width:22px;height:5px;background:#fff"></div>
<div class="a" style="left:25px;top:123px;width:4px;height:4px;border-radius:2px;border:0.8px solid #d8dadd"></div>
<div class="a" style="left:35.5px;top:122px;width:5px;height:5.5px;border-radius:3px;border:1px solid #55585e"></div>
<div class="a" style="left:46px;top:123px;width:4px;height:4px;border-radius:2px;border:0.8px solid #d2d4d8"></div></div>
<div class="a" style="left:195.4px;top:149px;width:4.6px;height:77px;background:#e0e3e7;border-radius:2.3px"></div>
<!-- tooltip -->
<div class="a" style="left:14px;top:141.4px;width:120px;height:17.4px;background:#fff;border:1px solid #c9ccd0;box-shadow:1px 1px 2px rgba(0,0,0,.18)"></div>
<div class="t" style="left:19px;top:144px;color:#33363b">查看文档缩略图 <span style="font-size:9.2px">(Alt+Shift+2)</span></div>
<!-- ===== main page ===== -->
<div class="a" id="page" style="left:297.6px;top:95.2px;width:396.7px;height:390.5px;background:#1c2224;overflow:hidden;box-shadow:0 0 0 1.3px #fff,0 0 4px 1px rgba(0,0,0,.13)">
<svg style="left:0.4px;top:0.8px" width="397" height="550" viewBox="298 96 397 550"><use href="#photo" x="298" y="96" width="397" height="550"/></svg>
<svg style="left:28.9px;top:23.3px" width="29" height="14.4" viewBox="0 0 29 14.4"><path d="M0 5.3L5.8 0L14.6 9L9.8 14.2Z" fill="#fff"/><path d="M15 0.6L10.6 5L19.8 14.4L24.2 10Z" fill="#fff" stroke="#4e5254" stroke-width="0.9"/><path d="M20 5L24.5 0.5L29 5L24.5 9.5Z" fill="#fff" stroke="#4e5254" stroke-width="0.5"/></svg>
<div class="a" style="left:63.4px;top:21px;font-size:9.6px;line-height:12px;color:#fff;white-space:nowrap">wondershare</div>
<div class="a" style="left:63.4px;top:31px;font-size:6.1px;line-height:8px;color:#fff;white-space:nowrap;font-weight:bold">万兴科技</div>
<div class="a" style="left:275.4px;top:376.8px;font-family:'Liberation Serif','Noto Serif CJK SC',serif;font-size:11.6px;line-height:16px;color:#06081c;white-space:nowrap;font-weight:600">制作人：<span style="display:inline-block;font-size:12px;transform:scaleX(.74);transform-origin:0 50%">TX</span></div>
</div>

<!-- ===== status bar ===== -->
<div class="a" id="statusbar" style="left:0;top:486px;width:800px;height:14px;background:#f5f6f8;border-top:1px solid #e4e6ea"></div>

<svg style="left:7px;top:491px" width="10" height="9" viewBox="0 0 10 9" class="ic"><rect x="0.6" y="0.6" width="8.8" height="7.8" rx="0.8"/><path d="M3.6 0.8V8.2"/></svg>
<div class="t" style="left:19px;top:490px">导航</div>
<div class="vd" style="left:44px;top:491px;height:9px"></div>
<svg style="left:53px;top:492px" width="9" height="8" viewBox="0 0 9 8" class="ic"><path d="M0.8 0.6V7.4M7.6 0.6L3.6 4L7.6 7.4" stroke="#b5b8bd"/></svg>
<svg style="left:70px;top:492px" width="6" height="8" viewBox="0 0 6 8" class="ic"><path d="M5 0.6L1 4L5 7.4" stroke="#b5b8bd"/></svg>
<div class="a" style="left:85px;top:488.6px;width:74px;height:13px;border:1px solid #dcdfe3;border-radius:2px;background:#fff"></div>
<div class="t c" style="left:86px;top:490px;width:73px;font-size:8.5px">1/8</div>
<svg style="left:168px;top:492px" width="6" height="8" viewBox="0 0 6 8" class="ic"><path d="M1 0.6L5 4L1 7.4" stroke="#33363b"/></svg>
<svg style="left:181px;top:492px" width="9" height="8" viewBox="0 0 9 8" class="ic"><path d="M8.2 0.6V7.4M1.4 0.6L5.4 4L1.4 7.4" stroke="#33363b"/></svg>
<div class="vd" style="left:200px;top:491px;height:9px"></div>
<svg style="left:207px;top:492px" width="26" height="9" viewBox="0 0 26 9" class="ic"><rect x="0.6" y="0.6" width="9" height="8" rx="0.6" stroke="#b5b8bd"/><path d="M7 4.5H3M4.4 3L3 4.5L4.4 6" stroke="#b5b8bd"/><rect x="15.6" y="0.6" width="9" height="8" rx="0.6" stroke="#b5b8bd"/><path d="M18 4.5H22M20.6 3L22 4.5L20.6 6" stroke="#b5b8bd"/></svg>
<!-- status right -->
<svg style="left:455px;top:491px" width="14" height="10" viewBox="0 0 14 10" class="ic"><path d="M0.8 6.4Q3.6 2.8 7 2.8T13.2 6.4Q10.4 10 7 10T0.8 6.4Z"/><circle cx="7" cy="6.4" r="1.8"/><path d="M7 0.2V1.4M3 0.8L3.8 2M11 0.8L10.2 2"/></svg>
<div class="hl" style="left:479px;top:490px;width:17px;height:11px"></div>
<svg style="left:483px;top:491px" width="10" height="10" viewBox="0 0 10 10" class="ic"><path d="M0.8 0.4V2.8H9.2V0.4M0.8 10V5.6H9.2V10"/></svg>
<div class="vd" style="left:502px;top:491px;height:9px"></div>
<div class="hl" style="left:507px;top:490px;width:13px;height:11px"></div>
<svg style="left:509px;top:491px" width="9" height="10" viewBox="0 0 9 10" class="ic"><path d="M0.7 1.2Q0.7 0.6 1.3 0.6H5.8L8.3 3V10H0.7ZM2.6 4.8H6.4M2.6 7.2H5"/></svg>
<svg style="left:523px;top:491px" width="11" height="10" viewBox="0 0 11 10" class="ic"><path d="M0.7 3Q0.7 0.8 2.6 0.8T4.6 3V10H0.7ZM6.4 3Q6.4 0.8 8.4 0.8T10.3 3V10H6.4Z"/></svg>
<div class="vd" style="left:541px;top:491px;height:9px"></div>
<svg style="left:550px;top:490px" width="12" height="11" viewBox="0 0 12 11" class="ic"><circle cx="6" cy="6" r="5.2"/><path d="M4.8 3.8V8.2L8.4 6Z"/></svg>
<div class="vd" style="left:568px;top:491px;height:9px"></div>
<svg style="left:575px;top:491px" width="11" height="10" viewBox="0 0 11 10" class="ic"><rect x="0.6" y="0.8" width="9.8" height="8.4" rx="1"/><path d="M3.2 3.4V6.8M7.6 3.4V6.8M5.4 4.2V4.3M5.4 6V6.1"/></svg>
<svg style="left:590px;top:491px" width="12" height="10" viewBox="0 0 12 10" class="ic"><rect x="2.6" y="2" width="6.8" height="7"/><path d="M0.8 0.6L2.6 2M11.2 0.6L9.4 2M0.8 10L2.6 9M11.2 10L9.4 9"/></svg>
<svg style="left:606px;top:491px" width="12" height="10" viewBox="0 0 12 10" class="ic"><path d="M1.6 7V1.4Q1.6 0.8 2.2 0.8H9.8Q10.4 0.8 10.4 1.4V7M0.8 9.2H11.2M2.2 7.8L0.8 9.2M9.8 7.8L11.2 9.2"/></svg>
<div class="t" style="left:621px;top:490px;font-size:8.5px">75%</div>
<svg style="left:640px;top:495px" width="4" height="3" viewBox="0 0 4 3"><path d="M0 0H4L2 2.4Z" fill="#4a4e55"/></svg>
<div class="a" style="left:653px;top:494.6px;width:6.4px;height:1.8px;background:#33363b"></div>
<div class="a" style="left:667px;top:494.6px;width:32px;height:1.6px;background:#8d9198"></div>
<div class="a" style="left:703px;top:495px;width:59px;height:1px;background:#d9dce0"></div>
<div class="a" style="left:730px;top:494px;width:1px;height:3px;background:#d0d3d8"></div>
<div class="a" style="left:696px;top:491px;width:9px;height:9px;border:1px solid #4a4e55;border-radius:5px;background:#fff"></div>
<svg style="left:765px;top:491px" width="8" height="8" viewBox="0 0 8 8"><path d="M4 0.4V7.6M0.4 4H7.6" stroke="#33363b" stroke-width="1.3" fill="none"/></svg>
<svg style="left:780px;top:491px" width="10" height="10" viewBox="0 0 10 10" class="ic"><path d="M0.7 3V0.7H3M7 0.7H9.3V3M9.3 7V9.3H7M3 9.3H0.7V7M0.9 0.9L3.6 3.6M9.1 0.9L6.4 3.6M9.1 9.1L6.4 6.4M0.9 9.1L3.6 6.4" stroke="#33363b"/></svg>
<!-- right scrollbar & float button -->
<div class="a" style="left:790px;top:91px;width:7px;height:395px;background:#eaecf0"></div>
<div class="a" style="left:797px;top:91px;width:2px;height:395px;background:#f8f9fb"></div>
<svg style="left:792.5px;top:96.5px" width="3.6" height="2.6" viewBox="0 0 6 4"><path d="M0 4L3 0L6 4Z" fill="#6d7178"/></svg>
<svg style="left:792.5px;top:478.5px" width="3.6" height="2.6" viewBox="0 0 6 4"><path d="M0 0L3 4L6 0Z" fill="#6d7178"/></svg>
<div class="a" style="left:791px;top:105.5px;width:6.4px;height:29.5px;background:#d4d7dd;border-radius:3px"></div>
<div class="a" style="left:768px;top:98px;width:19.4px;height:19.6px;border-radius:10px;background:#3b7ded;border:1px solid #fff"></div>
<svg style="left:772.5px;top:103px" width="11" height="10" viewBox="0 0 11 10" fill="none" stroke="#fff" stroke-width="1"><rect x="3.2" y="0.6" width="7.2" height="6.8" rx="0.6" fill="#3b7ded"/><path d="M3.2 2.6H10.4" stroke-width="1.6"/><path d="M5.6 4.2H9V6.2H5.6Z" stroke-width="0.8"/><path d="M0.8 5.4V8.6H3M1 7H2.4" stroke-width="0.9"/></svg>
<div class="a" style="left:799px;top:0;width:1px;height:500px;background:linear-gradient(180deg,#9fb0bd 0,#a9b6c2 12%,#7fa897 25%,#5f9a8a 38%,#2b62a0 45%,#2f6aa6 55%,#8a9a7a 65%,#6f93a8 80%,#8aa6b8 100%)"></div>
<svg style="left:0;top:0" width="800" height="500" viewBox="0 0 800 500"><path d="M339.5 369.5L27 154.6M59.5 155L27 154.6L36.5 181.5" stroke="#f0121e" stroke-width="3" fill="none" stroke-linecap="butt" stroke-linejoin="miter"/></svg>
</body>
</html>
